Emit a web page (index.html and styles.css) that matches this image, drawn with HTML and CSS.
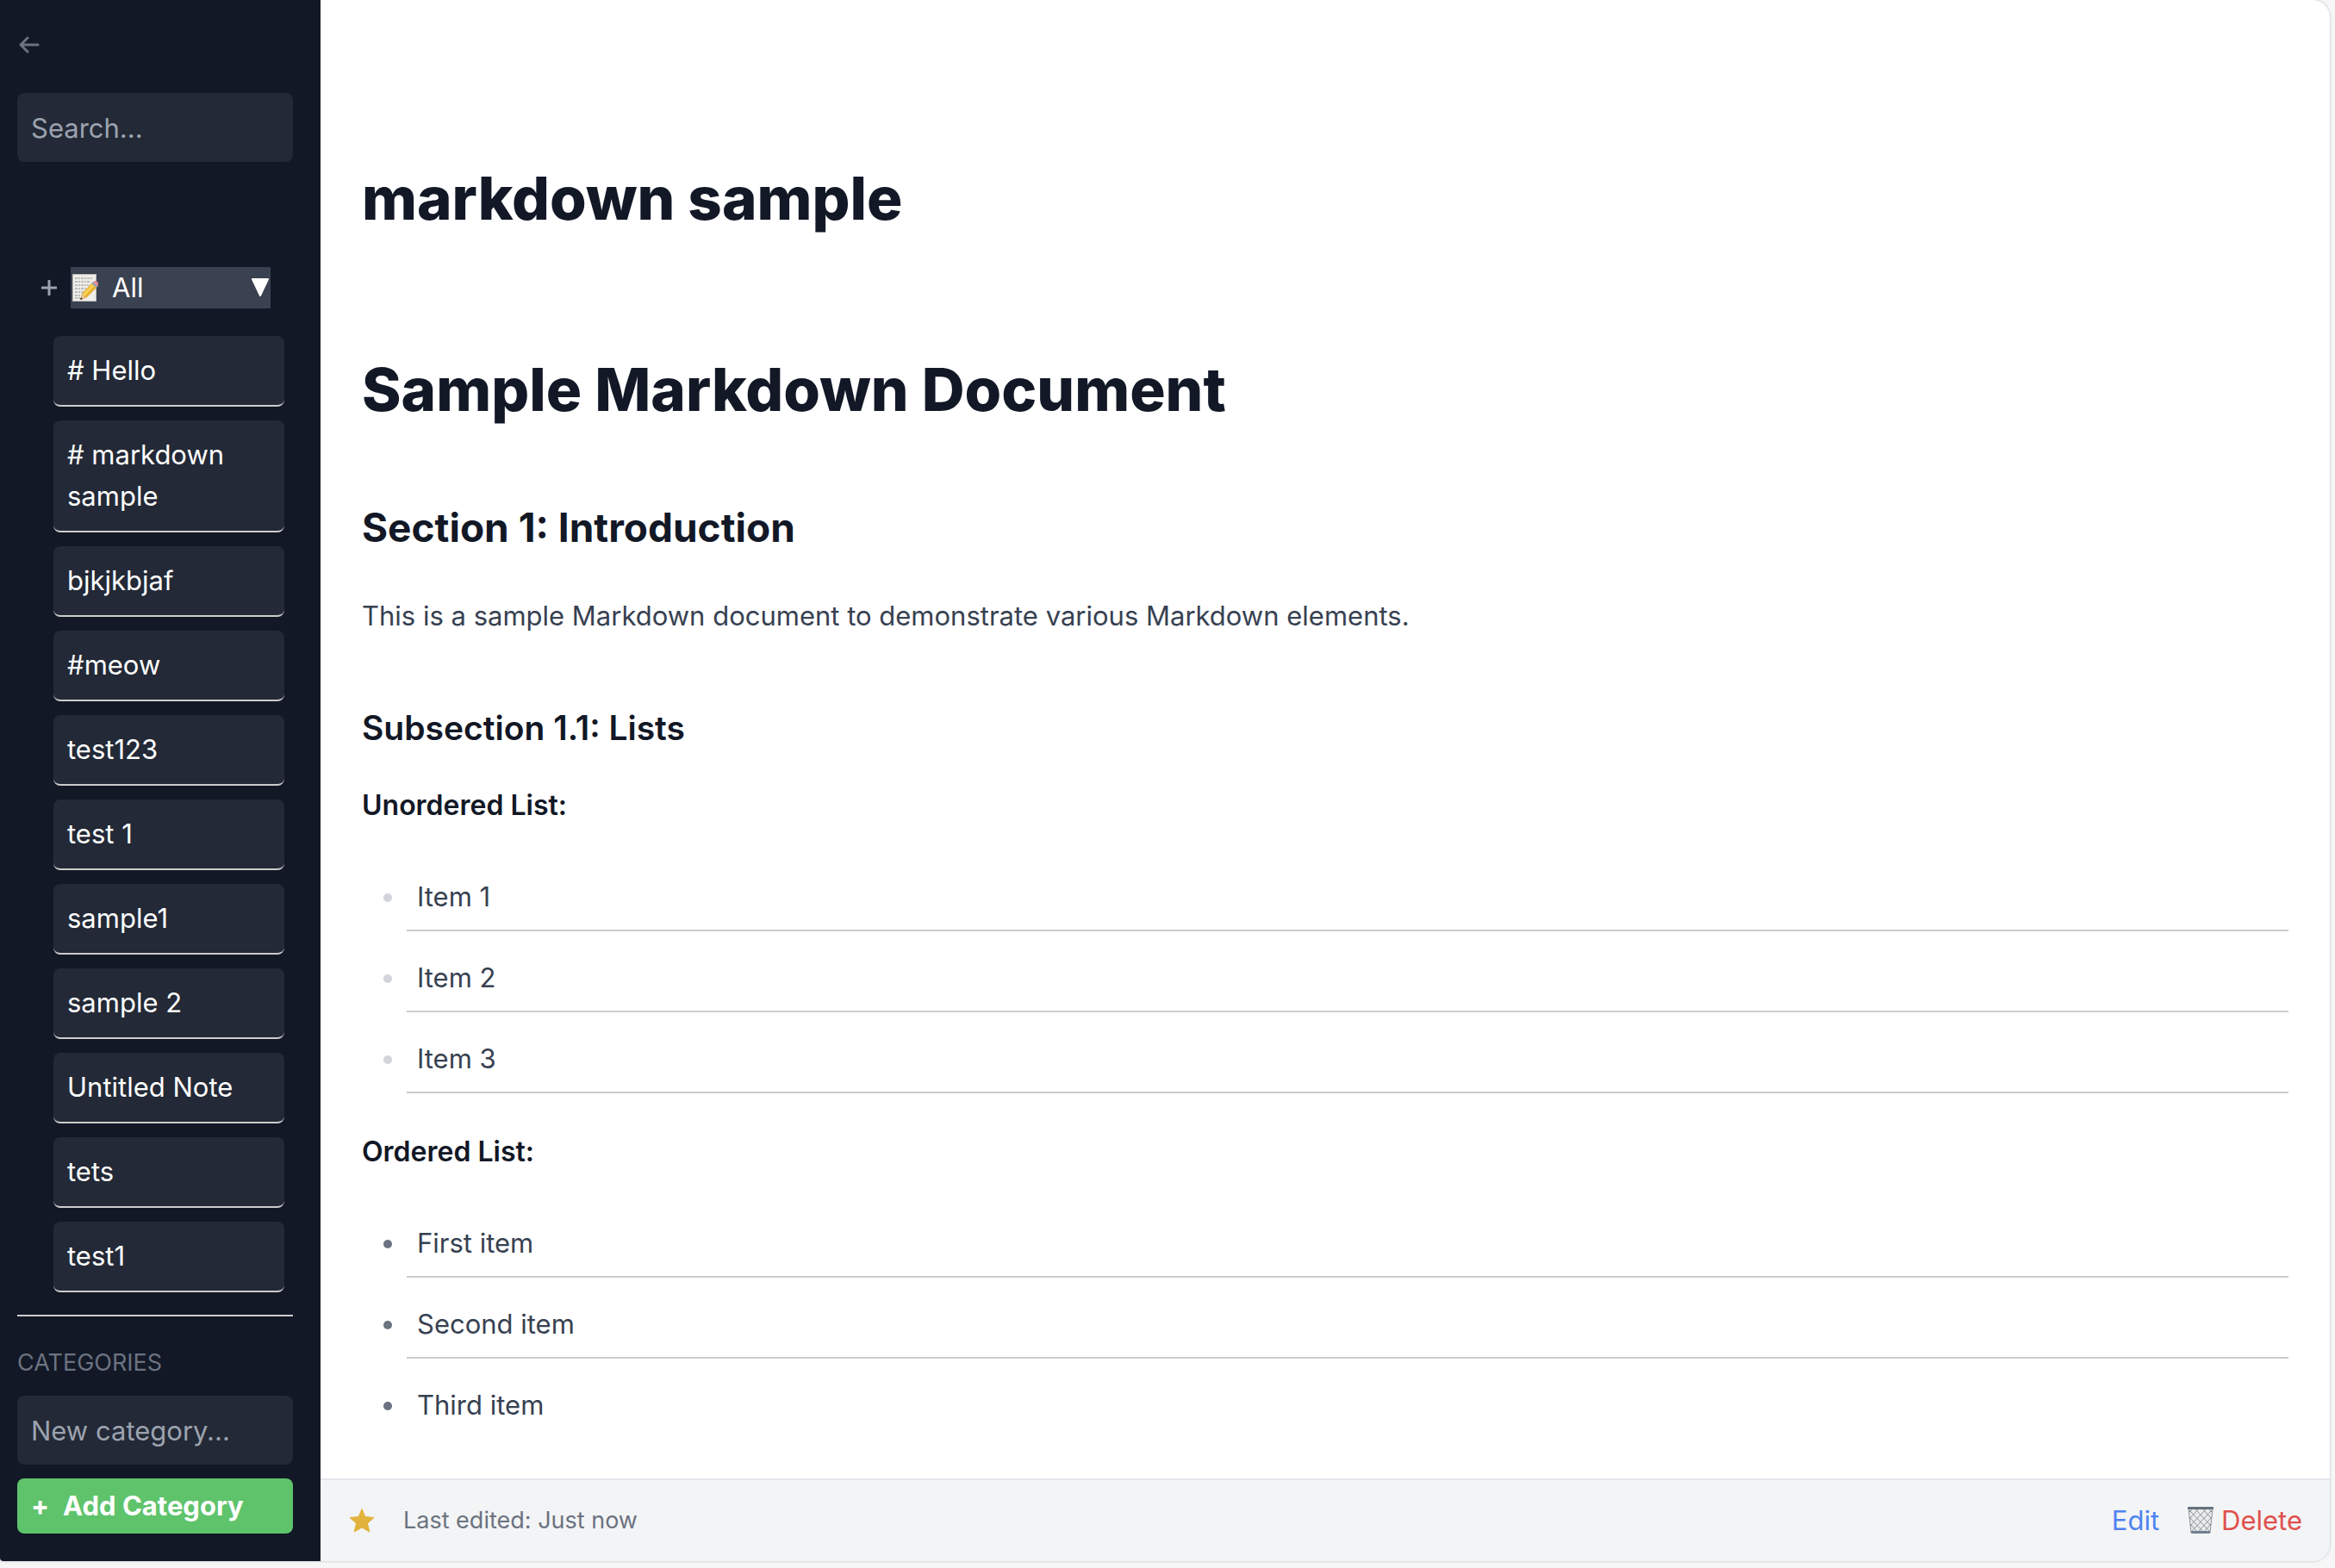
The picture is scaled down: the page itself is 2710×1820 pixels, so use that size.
FILE: index.html
```html
<!DOCTYPE html>
<html lang="en">
<head>
<meta charset="utf-8">
<title>markdown sample</title>
<link rel="stylesheet" href="styles.css">
</head>
<body>
<div class="window">
  <aside class="sidebar">
    <button class="back" type="button" aria-label="Back">
      <svg width="24" height="20" viewBox="0 0 24 20"><path d="M22 10H2.500M10 2L2 10L10 18" fill="none" stroke="currentColor" stroke-width="3" stroke-linecap="round" stroke-linejoin="round"/></svg>
    </button>
    <input class="field" type="text" placeholder="Search..." aria-label="Search">
    <div class="folder">
      <button class="add-note" type="button" aria-label="Add note"><svg width="18" height="18" viewBox="0 0 18 18"><path d="M9 1V17M1 9H17" stroke="currentColor" stroke-width="3" stroke-linecap="round"/></svg></button>
      <button class="folder-toggle" type="button">
        <svg class="memo" width="30" height="34" viewBox="0 0 30 34">
          <rect x="0" y="1" width="28" height="32" fill="#bdbdb8"/><rect x="1" y="2" width="26" height="30" fill="#eeede8"/>
          <path d="M3 6h20M3 10h18M3 14h16M3 18h14M3 22h10M3 26h6M3 29h8" stroke="#8b8b8b" stroke-width="1" stroke-dasharray="3 1 2 1"/>
          <path d="M9 31l2-7L22 12l6 5L16 29z" fill="#e9b132"/><path d="M12 25L23 13l2 2L14 27z" fill="#fbd558"/>
          <path d="M9 31l2-7 5 5z" fill="#e5c394"/><path d="M9 31l1-3 2 2z" fill="#333"/>
          <path d="M22 12l2-2 6 5-2 2z" fill="#9aa1ad"/><path d="M24 10q3-2 5 0t1 5z" fill="#ec8790"/>
        </svg>
        <span class="folder-name">All</span>
        <svg width="20" height="22" viewBox="0 0 20 22"><path d="M1 1H19L10 20Z" fill="#fff" stroke="#fff" stroke-width="2" stroke-linejoin="round"/></svg>
      </button>
    </div>
    <ul class="notes">
      <li><button class="note" type="button"># Hello</button></li>
      <li><button class="note" type="button"># markdown sample</button></li>
      <li><button class="note" type="button">bjkjkbjaf</button></li>
      <li><button class="note" type="button">#meow</button></li>
      <li><button class="note" type="button">test123</button></li>
      <li><button class="note" type="button">test 1</button></li>
      <li><button class="note" type="button">sample1</button></li>
      <li><button class="note" type="button">sample 2</button></li>
      <li><button class="note" type="button">Untitled Note</button></li>
      <li><button class="note" type="button">tets</button></li>
      <li><button class="note" type="button">test1</button></li>
    </ul>
    <section class="categories">
      <label class="categories-label" for="new-category">CATEGORIES</label>
      <input class="field" id="new-category" type="text" placeholder="New category...">
      <button class="add-category" type="button"><span>+</span><span>Add Category</span></button>
    </section>
  </aside>
  <main class="main">
    <article class="document">
      <h1 class="title">markdown sample</h1>
      <h1>Sample Markdown Document</h1>
      <h2>Section 1: Introduction</h2>
      <p>This is a sample Markdown document to demonstrate various Markdown elements.</p>
      <h3>Subsection 1.1: Lists</h3>
      <h4>Unordered List:</h4>
      <ul class="list">
        <li>Item 1</li>
        <li>Item 2</li>
        <li>Item 3</li>
      </ul>
      <h4>Ordered List:</h4>
      <ol class="list list-ordered">
        <li>First item</li>
        <li>Second item</li>
        <li>Third item</li>
      </ol>
    </article>
    <footer class="footer">
      <button class="star" type="button" aria-label="Favourite"><svg width="32" height="30" viewBox="0 0 32 30"><path d="M16 1.500L19.800 10.500L30 11.500L22.500 18.200L24.800 28L16 23L7.200 28L9.500 18.200L2 11.500L12.200 10.500Z" fill="#e2b33c" stroke="#e2b33c" stroke-linejoin="round"/></svg></button>
      <span class="edited">Last edited: Just now</span>
      <a class="edit" href="#edit">Edit</a>
      <a class="delete" href="#delete">
        <svg width="32" height="32" viewBox="0 0 32 32">
          <path d="M2 2L5 30H27L30 2Z" fill="#e9ebec"/>
          <path d="M2 7l5-5M3 14L14 2M4 22L22 3M5 29L29 4M12 30L29 12M19 30L28 20M30 7l-5-5M29 14L18 2M28 22L10 3M27 29L3 4M20 30L3 12M13 30L4 20" stroke="#8b949b" stroke-width="1" fill="none"/>
          <path d="M2 2L5 30M30 2L27 30" stroke="#89929a"/>
          <rect x="1" y="0" width="30" height="3" rx="1" fill="#65727e"/><rect x="5" y="28" width="22" height="3" rx="1" fill="#71808f"/>
        </svg>
        <span>Delete</span>
      </a>
    </footer>
  </main>
</div>
</body>
</html>
```
FILE: styles.css
```css
* { box-sizing: border-box; }
body {
  margin: 0;
  padding: 0 6px 8px 0;
  min-height: 100vh;
  display: flex;
  background: #f6f6f6;
  font: 31px/48px Inter, "Liberation Sans", sans-serif;
  color: #374151;
}
h1, h2, h3, h4, p, ul, ol { margin: 0; padding: 0; }
button, input { font: inherit; color: inherit; border: 0; margin: 0; padding: 0; background: none; }
button { text-align: left; }
a { text-decoration: none; }
svg { display: block; flex: none; }
.window {
  flex: 1;
  display: flex;
  border-radius: 0 20px 20px 4px;
  overflow: hidden;
  background: #fff;
  box-shadow: 0 0 2px 1px #d4d6d9;
}
.sidebar {
  width: 372px;
  flex: none;
  padding: 42px 32px 32px 20px;
  background: #121826;
  color: #fff;
}
.back { display: block; margin: 0 0 46px 2px; color: #6b7280; }
.field {
  display: block;
  width: 100%;
  height: 80px;
  padding: 16px;
  border-radius: 8px;
  background: #232936;
}
.field::placeholder { color: #9ca3af; opacity: 1; }
.folder { display: flex; align-items: center; gap: 16px; margin: 122px 26px 32px 28px; }
.add-note { color: #9ca3af; }
.folder-toggle {
  flex: 1;
  height: 48px;
  padding: 0 2px;
  display: flex;
  align-items: center;
  background: #3a4150;
}
.folder-name { flex: 1; padding-left: 16px; }
.notes { list-style: none; display: grid; gap: 16px; margin: 0 10px 26px 42px; }
.note {
  display: block;
  width: 100%;
  padding: 16px;
  border-bottom: 2px solid #ccc;
  border-radius: 8px;
  background: #232936;
}
.categories { border-top: 2px solid #ccc; padding-top: 32px; display: grid; gap: 16px; }
.categories-label { font-size: 27px; line-height: 44px; color: #6b7280; }
.add-category {
  display: flex;
  gap: 16px;
  padding: 8px 16px;
  border-radius: 8px;
  background: #5fc36c;
  font-weight: 700;
}
.main { flex: 1; min-width: 0; display: flex; flex-direction: column; }
.document { flex: 1; padding: 190px 48px 0; line-height: 56px; }
h1, h2, h3, h4 { color: #121826; }
h1 { font-size: 69px; line-height: 80px; font-weight: 800; margin-bottom: 88px; }
.title { margin-bottom: 142px; }
h2 { font-size: 46px; line-height: 64px; font-weight: 700; margin-bottom: 43px; }
p { margin-bottom: 70px; }
h3 { font-size: 39px; line-height: 64px; font-weight: 600; margin-bottom: 34px; }
h4 { font-size: 32px; line-height: 48px; font-weight: 600; margin-bottom: 44px; }
.list { list-style: none; display: grid; gap: 16px; margin: 0 0 44px 52px; }
.list li { position: relative; padding: 10px 12px; border-bottom: 2px solid #ccc; }
.list li::before {
  content: "";
  position: absolute;
  left: -27px;
  top: 34px;
  width: 10px;
  height: 10px;
  border-radius: 50%;
  background: #d1d5db;
}
.list-ordered li::before { background: #6b7280; }
.list-ordered { margin-bottom: 0; }
.list-ordered li:last-child { border-bottom: 0; }
.footer {
  height: 96px;
  display: flex;
  align-items: center;
  padding: 0 32px;
  border-top: 2px solid #e5e7eb;
  background: #f3f4f6;
}
.edited { flex: 1; padding-left: 32px; font-size: 27px; color: #6b7280; }
.edit { color: #4f83f1; margin-right: 32px; }
.delete { display: flex; align-items: center; gap: 8px; color: #df514c; }
```
